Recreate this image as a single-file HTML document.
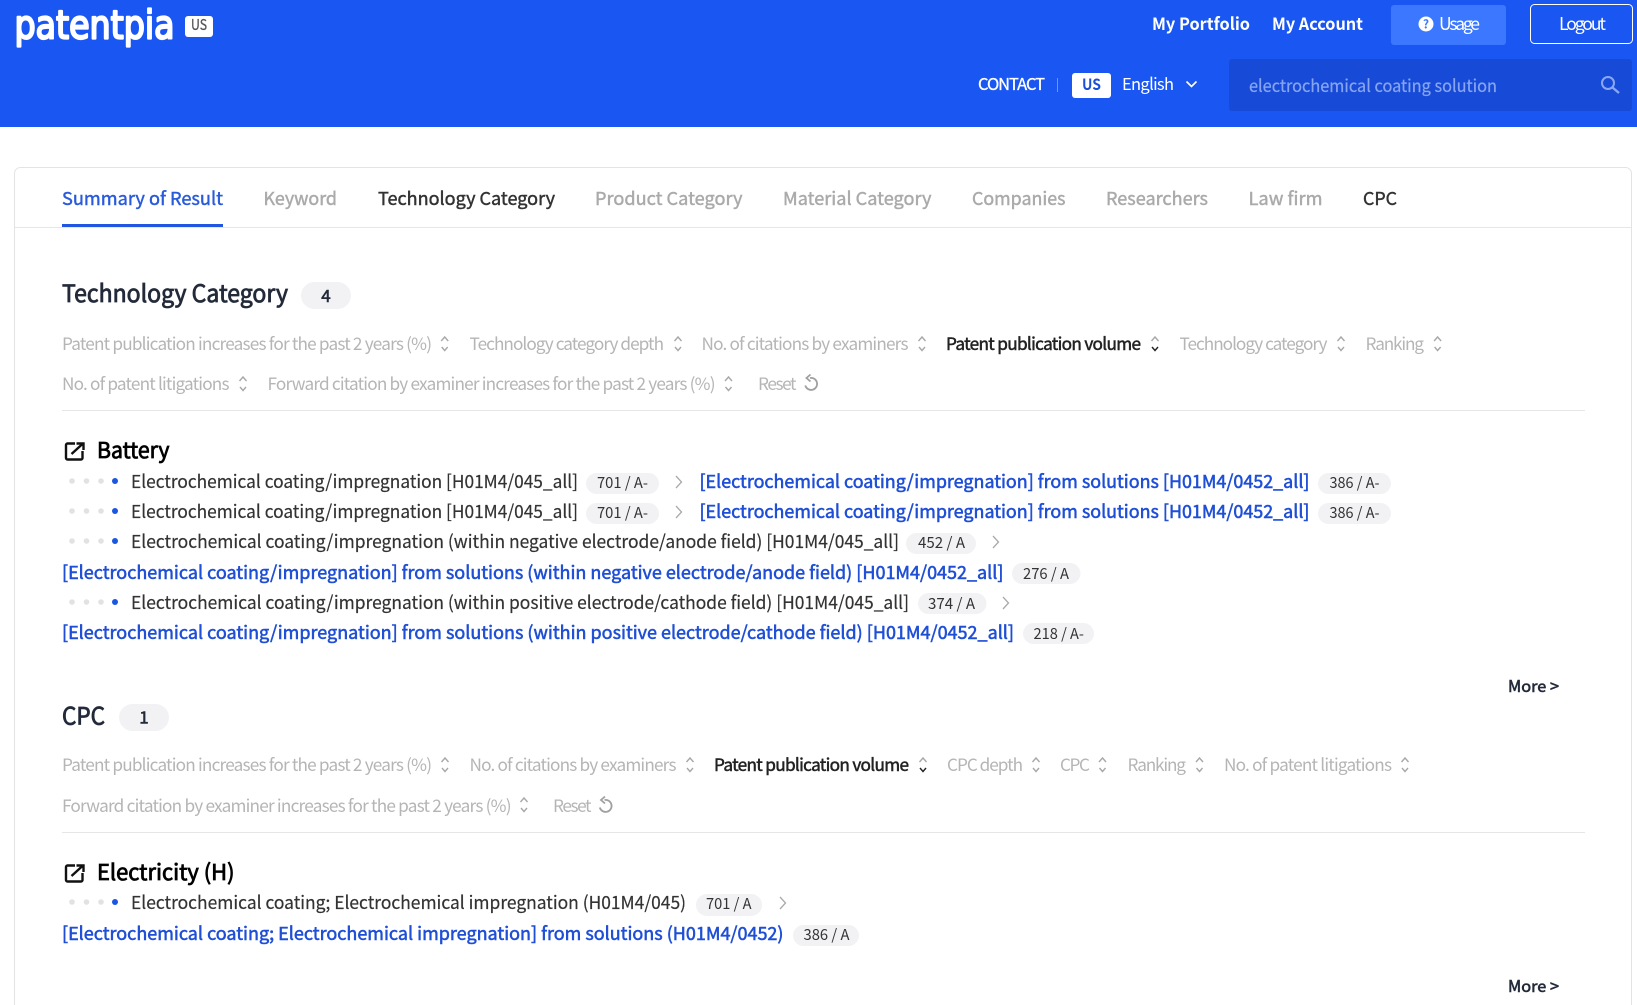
<!DOCTYPE html>
<html lang="en">
<head>
<meta charset="utf-8">
<title>patentpia</title>
<style>
html,body{margin:0;padding:0;background:#fff;width:1637px;height:1005px;overflow:hidden}
svg{display:block}
text{font-family:"Noto Sans CJK KR","Liberation Sans",sans-serif;white-space:pre}
.nb{font-size:17px;font-weight:700;fill:#fff}
.tab{font-size:18px;fill:#aaa;stroke:#aaa;stroke-width:.45}
.s{font-size:17.2px;fill:#b5b5b5}
.sa{font-size:17.2px;fill:#222;stroke:#222;stroke-width:.5}
.h{font-size:24px;fill:#232a3a;stroke:#232a3a;stroke-width:.8}
.n{font-size:17px;fill:#232a3a;stroke:#232a3a;stroke-width:.6}
.cat{font-size:22px;fill:#000;stroke:#000;stroke-width:.8}
.t{font-size:18px;fill:#333;stroke:#333;stroke-width:.2}
.l{font-size:18px;fill:#1f4fd6;stroke:#1f4fd6;stroke-width:.55}
.b{font-size:15px;fill:#333}
.m{font-size:16px;fill:#232a3a;stroke:#232a3a;stroke-width:.6}
.ch{fill:none;stroke:#a8a8a8;stroke-width:1.4}
.cd{fill:none;stroke:#222;stroke-width:1.4}
.ar{fill:none;stroke:#aaa;stroke-width:1.3}
.pill{fill:#f2f2f5}
.d{fill:#e2e2e2}
.dd{fill:#1a56e0}
.ic{fill:none;stroke:#111;stroke-width:2.4}
</style>
</head>
<body>
<svg width="1637" height="1005" viewBox="0 0 1637 1005" xmlns="http://www.w3.org/2000/svg">
<!-- header -->
<rect x="0" y="0" width="1637" height="127" fill="#1a56f2"/>
<text x="14.500" y="38.500" font-size="39" fill="#fff" stroke="#fff" stroke-width="2.200" stroke-linejoin="round" textLength="160" lengthAdjust="spacingAndGlyphs" style="font-family:'DejaVu Sans',sans-serif">patentpia</text>
<rect x="185" y="16" width="28" height="21" rx="3" fill="#fff"/>
<text x="191" y="30" font-size="15" fill="#555" stroke="#555" stroke-width=".3" textLength="16" lengthAdjust="spacingAndGlyphs">US</text>

<text class="nb" x="1152" y="30" textLength="98" lengthAdjust="spacingAndGlyphs">My Portfolio</text>
<text class="nb" x="1272" y="30" textLength="91" lengthAdjust="spacingAndGlyphs">My Account</text>
<rect x="1391" y="5" width="115" height="40" rx="3" fill="#3b78ff"/>
<circle cx="1426" cy="24" r="7.500" fill="#fff"/>
<text x="1426" y="28.500" font-size="12" font-weight="700" fill="#3b78ff" text-anchor="middle">?</text>
<text x="1439" y="30" font-size="17.500" fill="#fff" textLength="41" lengthAdjust="spacing">Usage</text>
<rect x="1530.500" y="4.500" width="102" height="39" rx="4" fill="none" stroke="#fff"/>
<text x="1559" y="30" font-size="17.500" fill="#fff" textLength="47" lengthAdjust="spacing">Logout</text>

<text x="978" y="90" font-size="16.500" fill="#fff" stroke="#fff" stroke-width=".3" textLength="67" lengthAdjust="spacing">CONTACT</text>
<rect x="1057" y="78" width="1" height="14" fill="#6f96f7"/>
<rect x="1072" y="73" width="39" height="25" rx="3" fill="#fff"/>
<text x="1082" y="90" font-size="15.500" font-weight="700" fill="#1a4fd8" textLength="19" lengthAdjust="spacingAndGlyphs">US</text>
<text x="1122" y="90" font-size="16.500" fill="#fff" textLength="52" lengthAdjust="spacing">English</text>
<path d="M1186.500 81.500 1191.500 86.500 1196.500 81.500" fill="none" stroke="#fff" stroke-width="1.600"/>
<rect x="1229" y="59" width="403" height="52" rx="3" fill="#174ad6"/>
<text x="1249" y="92" font-size="17" fill="#86a4f2" stroke="#86a4f2" stroke-width=".25" textLength="248" lengthAdjust="spacingAndGlyphs">electrochemical coating solution</text>
<circle cx="1608" cy="83" r="6" fill="none" stroke="#8aa8f2" stroke-width="2"/>
<path d="M1612.500 87.500 1619 93" fill="none" stroke="#8aa8f2" stroke-width="2.400"/>

<!-- card -->
<rect x="14.500" y="167.500" width="1617" height="860" rx="6" fill="#fff" stroke="#e3e3e3"/>
<rect x="15" y="227" width="1616" height="1" fill="#e6e6e6"/>
<text class="tab" x="62" y="205" style="fill:#2a5bdc;stroke:#2a5bdc" textLength="161" lengthAdjust="spacingAndGlyphs">Summary of Result</text>
<rect x="62" y="224" width="161" height="3" fill="#2255e0"/>
<text class="tab" x="263.500" y="205" textLength="73.500" lengthAdjust="spacingAndGlyphs">Keyword</text>
<text class="tab" x="378" y="205" style="fill:#333;stroke:#333" textLength="177" lengthAdjust="spacingAndGlyphs">Technology Category</text>
<text class="tab" x="595" y="205" textLength="147.500" lengthAdjust="spacingAndGlyphs">Product Category</text>
<text class="tab" x="783" y="205" textLength="148.500" lengthAdjust="spacingAndGlyphs">Material Category</text>
<text class="tab" x="972" y="205" textLength="93.500" lengthAdjust="spacingAndGlyphs">Companies</text>
<text class="tab" x="1106" y="205" textLength="102" lengthAdjust="spacingAndGlyphs">Researchers</text>
<text class="tab" x="1248.500" y="205" textLength="74" lengthAdjust="spacingAndGlyphs">Law firm</text>
<text class="tab" x="1363" y="205" style="fill:#333;stroke:#333" textLength="34" lengthAdjust="spacingAndGlyphs">CPC</text>

<!-- Technology Category section -->
<text class="h" x="62" y="302" textLength="226" lengthAdjust="spacingAndGlyphs">Technology Category</text>
<rect class="pill" x="301" y="282" width="50" height="27" rx="13.500"/>
<text class="n" x="326" y="302" text-anchor="middle">4</text>

<text class="s" x="62" y="350" textLength="370" lengthAdjust="spacing">Patent publication increases for the past 2 years (%)</text>
<path class="ch" transform="translate(444.700 336)" d="M-3.500 5 0 1 3.500 5M-3 11 0 14.500 3 11"/>
<text class="s" x="469.500" y="350" textLength="194.500" lengthAdjust="spacing">Technology category depth</text>
<path class="ch" transform="translate(678 336)" d="M-3.500 5 0 1 3.500 5M-3 11 0 14.500 3 11"/>
<text class="s" x="701.500" y="350" textLength="207" lengthAdjust="spacing">No. of citations by examiners</text>
<path class="ch" transform="translate(922 336)" d="M-3.500 5 0 1 3.500 5M-3 11 0 14.500 3 11"/>
<text class="sa" x="946" y="350" textLength="195" lengthAdjust="spacing">Patent publication volume</text>
<path class="ch" transform="translate(1155 336)" d="M-3.500 5 0 1 3.500 5"/>
<path class="cd" transform="translate(1155 336)" d="M-3 11 0 14.500 3 11"/>
<text class="s" x="1179.500" y="350" textLength="148" lengthAdjust="spacing">Technology category</text>
<path class="ch" transform="translate(1341 336)" d="M-3.500 5 0 1 3.500 5M-3 11 0 14.500 3 11"/>
<text class="s" x="1365.500" y="350" textLength="58.500" lengthAdjust="spacing">Ranking</text>
<path class="ch" transform="translate(1437.600 336)" d="M-3.500 5 0 1 3.500 5M-3 11 0 14.500 3 11"/>

<text class="s" x="62" y="390" textLength="167.500" lengthAdjust="spacing">No. of patent litigations</text>
<path class="ch" transform="translate(243 376)" d="M-3.500 5 0 1 3.500 5M-3 11 0 14.500 3 11"/>
<text class="s" x="267.500" y="390" textLength="448" lengthAdjust="spacing">Forward citation by examiner increases for the past 2 years (%)</text>
<path class="ch" transform="translate(728.500 376)" d="M-3.500 5 0 1 3.500 5M-3 11 0 14.500 3 11"/>
<text class="s" x="758" y="390" textLength="38.500" lengthAdjust="spacing">Reset</text>
<g transform="translate(811 384)" fill="none" stroke="#a0a0a0" stroke-width="1.800"><path d="M-1 -6A6 6 0 1 1 -5.700 1.500"/><path d="M-0.500 -9.500-4.500 -6-0.500 -2.500"/></g>
<rect x="62" y="410" width="1523" height="1" fill="#e6e6e6"/>

<!-- Battery -->
<path class="ic" d="M75 443.500H67.500a1.500 1.500 0 0 0-1.500 1.500V458a1.500 1.500 0 0 0 1.500 1.500H81a1.500 1.500 0 0 0 1.500-1.500V451M71.500 454 83 443.500M76.500 443.500H83.500V450"/>
<text class="cat" x="97" y="458" textLength="72.500" lengthAdjust="spacingAndGlyphs">Battery</text>

<g>
<circle class="d" cx="72" cy="481" r="2.800"/><circle class="d" cx="86.500" cy="481" r="2.800"/><circle class="d" cx="101" cy="481" r="2.800"/><circle class="dd" cx="115" cy="481" r="3"/>
<text class="t" x="131" y="488" textLength="447" lengthAdjust="spacingAndGlyphs">Electrochemical coating/impregnation [H01M4/045_all]</text>
<rect class="pill" x="586" y="473" width="73" height="21" rx="10.500"/>
<text class="b" x="597" y="488" textLength="51" lengthAdjust="spacingAndGlyphs">701 / A-</text>
<path class="ar" d="M676 476 681.500 482 676 488"/>
<text class="l" x="699.500" y="488" textLength="610" lengthAdjust="spacingAndGlyphs">[Electrochemical coating/impregnation] from solutions [H01M4/0452_all]</text>
<rect class="pill" x="1318" y="473" width="73" height="21" rx="10.500"/>
<text class="b" x="1329.500" y="488" textLength="50" lengthAdjust="spacingAndGlyphs">386 / A-</text>
</g>
<g>
<circle class="d" cx="72" cy="511" r="2.800"/><circle class="d" cx="86.500" cy="511" r="2.800"/><circle class="d" cx="101" cy="511" r="2.800"/><circle class="dd" cx="115" cy="511" r="3"/>
<text class="t" x="131" y="518" textLength="447" lengthAdjust="spacingAndGlyphs">Electrochemical coating/impregnation [H01M4/045_all]</text>
<rect class="pill" x="586" y="503" width="73" height="21" rx="10.500"/>
<text class="b" x="597" y="518" textLength="51" lengthAdjust="spacingAndGlyphs">701 / A-</text>
<path class="ar" d="M676 506 681.500 512 676 518"/>
<text class="l" x="699.500" y="518" textLength="610" lengthAdjust="spacingAndGlyphs">[Electrochemical coating/impregnation] from solutions [H01M4/0452_all]</text>
<rect class="pill" x="1318" y="503" width="73" height="21" rx="10.500"/>
<text class="b" x="1329.500" y="518" textLength="50" lengthAdjust="spacingAndGlyphs">386 / A-</text>
</g>
<g>
<circle class="d" cx="72" cy="541" r="2.800"/><circle class="d" cx="86.500" cy="541" r="2.800"/><circle class="d" cx="101" cy="541" r="2.800"/><circle class="dd" cx="115" cy="541" r="3"/>
<text class="t" x="131" y="548" textLength="768" lengthAdjust="spacingAndGlyphs">Electrochemical coating/impregnation (within negative electrode/anode field) [H01M4/045_all]</text>
<rect class="pill" x="906" y="533" width="70" height="21" rx="10.500"/>
<text class="b" x="918" y="548" textLength="47" lengthAdjust="spacingAndGlyphs">452 / A</text>
<path class="ar" d="M993 536 998.500 542 993 548"/>
</g>
<g>
<text class="l" x="62" y="579" textLength="941.500" lengthAdjust="spacingAndGlyphs">[Electrochemical coating/impregnation] from solutions (within negative electrode/anode field) [H01M4/0452_all]</text>
<rect class="pill" x="1012" y="563" width="68.500" height="21" rx="10.500"/>
<text class="b" x="1023" y="579" textLength="46" lengthAdjust="spacingAndGlyphs">276 / A</text>
</g>
<g>
<circle class="d" cx="72" cy="602" r="2.800"/><circle class="d" cx="86.500" cy="602" r="2.800"/><circle class="d" cx="101" cy="602" r="2.800"/><circle class="dd" cx="115" cy="602" r="3"/>
<text class="t" x="131" y="609" textLength="778" lengthAdjust="spacingAndGlyphs">Electrochemical coating/impregnation (within positive electrode/cathode field) [H01M4/045_all]</text>
<rect class="pill" x="918" y="593" width="68.500" height="21" rx="10.500"/>
<text class="b" x="928" y="609" textLength="47" lengthAdjust="spacingAndGlyphs">374 / A</text>
<path class="ar" d="M1003 597 1008.500 603 1003 609"/>
</g>
<g>
<text class="l" x="62" y="639" textLength="952" lengthAdjust="spacingAndGlyphs">[Electrochemical coating/impregnation] from solutions (within positive electrode/cathode field) [H01M4/0452_all]</text>
<rect class="pill" x="1023" y="623" width="71" height="21" rx="10.500"/>
<text class="b" x="1033.500" y="639" textLength="50.500" lengthAdjust="spacingAndGlyphs">218 / A-</text>
</g>
<text class="m" x="1508" y="692" textLength="51" lengthAdjust="spacingAndGlyphs">More &gt;</text>

<!-- CPC section -->
<text class="h" x="62" y="724.500" textLength="43" lengthAdjust="spacingAndGlyphs">CPC</text>
<rect class="pill" x="119" y="704" width="50" height="27" rx="13.500"/>
<text class="n" x="144" y="723.500" text-anchor="middle">1</text>

<text class="s" x="62" y="771" textLength="370" lengthAdjust="spacing">Patent publication increases for the past 2 years (%)</text>
<path class="ch" transform="translate(445 757)" d="M-3.500 5 0 1 3.500 5M-3 11 0 14.500 3 11"/>
<text class="s" x="469.500" y="771" textLength="207" lengthAdjust="spacing">No. of citations by examiners</text>
<path class="ch" transform="translate(690 757)" d="M-3.500 5 0 1 3.500 5M-3 11 0 14.500 3 11"/>
<text class="sa" x="714" y="771" textLength="195" lengthAdjust="spacing">Patent publication volume</text>
<path class="ch" transform="translate(923 757)" d="M-3.500 5 0 1 3.500 5"/>
<path class="cd" transform="translate(923 757)" d="M-3 11 0 14.500 3 11"/>
<text class="s" x="947" y="771" textLength="76" lengthAdjust="spacing">CPC depth</text>
<path class="ch" transform="translate(1036 757)" d="M-3.500 5 0 1 3.500 5M-3 11 0 14.500 3 11"/>
<text class="s" x="1060" y="771" textLength="30" lengthAdjust="spacing">CPC</text>
<path class="ch" transform="translate(1102.500 757)" d="M-3.500 5 0 1 3.500 5M-3 11 0 14.500 3 11"/>
<text class="s" x="1127.500" y="771" textLength="58.500" lengthAdjust="spacing">Ranking</text>
<path class="ch" transform="translate(1199.500 757)" d="M-3.500 5 0 1 3.500 5M-3 11 0 14.500 3 11"/>
<text class="s" x="1224" y="771" textLength="168" lengthAdjust="spacing">No. of patent litigations</text>
<path class="ch" transform="translate(1405 757)" d="M-3.500 5 0 1 3.500 5M-3 11 0 14.500 3 11"/>

<text class="s" x="62" y="812" textLength="449.500" lengthAdjust="spacing">Forward citation by examiner increases for the past 2 years (%)</text>
<path class="ch" transform="translate(524 797)" d="M-3.500 5 0 1 3.500 5M-3 11 0 14.500 3 11"/>
<text class="s" x="553" y="812" textLength="38.500" lengthAdjust="spacing">Reset</text>
<g transform="translate(605.500 806)" fill="none" stroke="#a0a0a0" stroke-width="1.800"><path d="M-1 -6A6 6 0 1 1 -5.700 1.500"/><path d="M-0.500 -9.500-4.500 -6-0.500 -2.500"/></g>
<rect x="62" y="832" width="1523" height="1" fill="#e6e6e6"/>

<path class="ic" d="M75 865.500H67.500a1.500 1.500 0 0 0-1.500 1.500V880a1.500 1.500 0 0 0 1.500 1.500H81a1.500 1.500 0 0 0 1.500-1.500V873M71.500 876 83 865.500M76.500 865.500H83.500V872"/>
<text class="cat" x="97" y="880" textLength="137.500" lengthAdjust="spacingAndGlyphs">Electricity (H)</text>

<circle class="d" cx="72" cy="902" r="2.800"/><circle class="d" cx="86.500" cy="902" r="2.800"/><circle class="d" cx="101" cy="902" r="2.800"/><circle class="dd" cx="115" cy="902" r="3"/>
<text class="t" x="131" y="909" textLength="555" lengthAdjust="spacingAndGlyphs">Electrochemical coating; Electrochemical impregnation (H01M4/045)</text>
<rect class="pill" x="696" y="894" width="66" height="22" rx="11"/>
<text class="b" x="706" y="909" textLength="45.500" lengthAdjust="spacingAndGlyphs">701 / A</text>
<path class="ar" d="M780 897 785.500 903 780 909"/>
<text class="l" x="62" y="940" textLength="721.500" lengthAdjust="spacingAndGlyphs">[Electrochemical coating; Electrochemical impregnation] from solutions (H01M4/0452)</text>
<rect class="pill" x="793" y="925" width="66" height="21" rx="10.500"/>
<text class="b" x="803.500" y="940" textLength="46" lengthAdjust="spacingAndGlyphs">386 / A</text>
<text class="m" x="1508" y="992" textLength="51" lengthAdjust="spacingAndGlyphs">More &gt;</text>
</svg>
</body>
</html>
